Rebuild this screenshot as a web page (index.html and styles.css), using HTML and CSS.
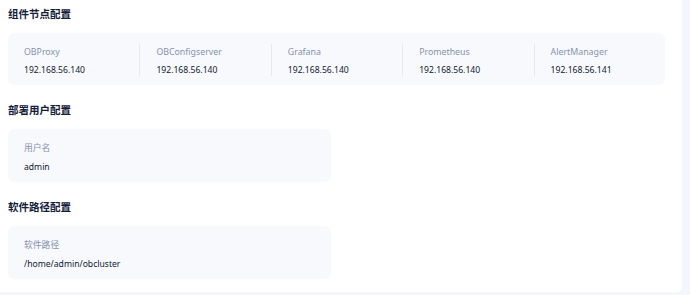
FILE: index.html
```html
<!DOCTYPE html>
<html lang="zh-CN">
<head>
  <meta charset="UTF-8" /><meta name="viewport" content="width=device-width,initial-scale=1"/>
  <title>配置信息</title>
  <link rel="stylesheet" href="styles.css">
</head>
<body>
  <div class="panel">

    <!-- 组件节点 -->
    <div class="title">组件节点配置</div>
    <div class="card wide">
      <div class="col">
        <div class="label">OBProxy</div>
        <div class="value">192.168.56.140</div>
      </div>
      <div class="col">
        <div class="label">OBConfigserver</div>
        <div class="value">192.168.56.140</div>
      </div>
      <div class="col">
        <div class="label">Grafana</div>
        <div class="value">192.168.56.140</div>
      </div>
      <div class="col">
        <div class="label">Prometheus</div>
        <div class="value">192.168.56.140</div>
      </div>
      <div class="col">
        <div class="label">AlertManager</div>
        <div class="value">192.168.56.141</div>
      </div>
    </div>

    <!-- 部署用户 -->
    <div class="title">部署用户配置</div>
    <div class="card half">
      <div class="label">用户名</div>
      <div class="value">admin</div>
    </div>

    <!-- 软件路径 -->
    <div class="title">软件路径配置</div>
    <div class="card half">
      <div class="label">软件路径</div>
      <div class="value">/home/admin/obcluster</div>
    </div>

  </div>
</body>
</html>
```

FILE: styles.css
```css
body { margin: 0; background: #f3f6fc; font-family: "Noto Sans", "Noto Sans CJK SC", sans-serif; color: #132039; }
.panel { width: 682px; height: 292px; box-sizing: border-box; background: #fff; padding: 6px 0 0 8px; border-radius: 0 0 5px 0; }
.title { font-size: 10.5px; line-height: 16px; font-weight: 700; margin-bottom: 11px; }
.card { background: #f8f9fd; border-radius: 6px; margin-bottom: 17px; box-sizing: border-box; }
.card.wide { width: 657px; display: grid; grid-template-columns: repeat(5, 1fr); padding: 11px 0 9px; }
.card.half { width: 323px; padding: 12px 16px 8px; }
.col { padding-left: 16px; }
.col + .col { border-left: 1px solid #e6e9f0; }
.label { font-size: 8.8px; line-height: 14px; color: #8592ad; margin: 1px 0 4px; }
.value { font-size: 8.6px; line-height: 14px; color: #0e1a30; margin-bottom: -1px; }
.card.half .label { margin: 0 0 5px; }
.card.half .value { margin-bottom: 0; }
```
